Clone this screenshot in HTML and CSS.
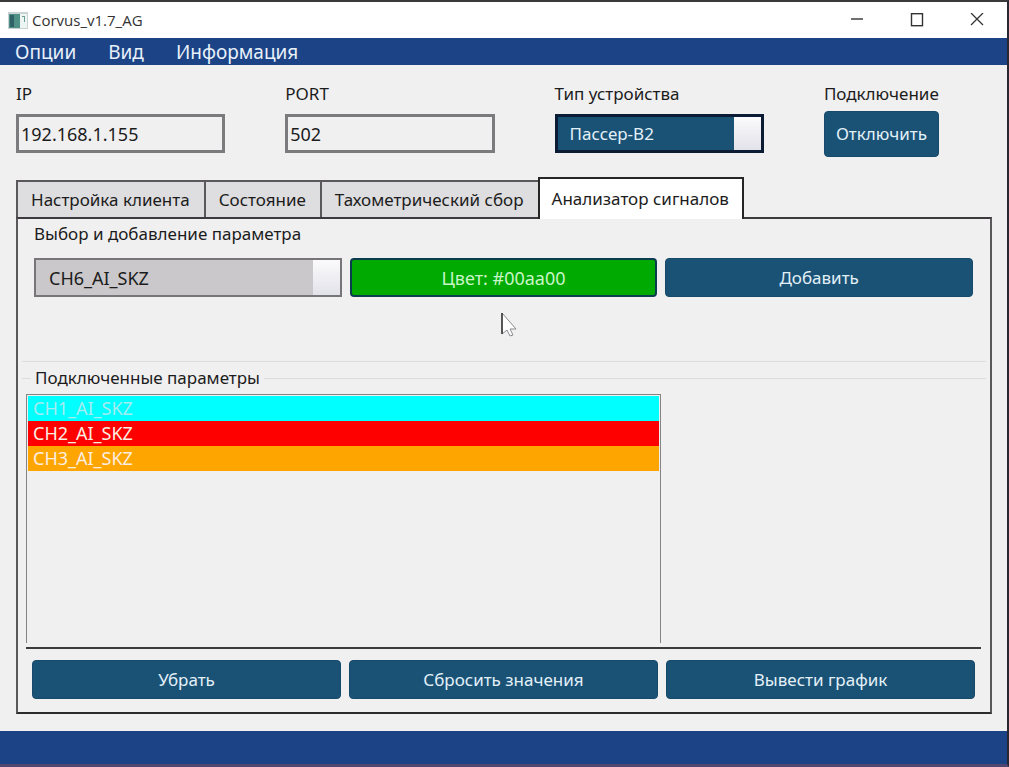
FILE: index.html
```
<!DOCTYPE html>
<html lang="ru">
<head>
    <meta charset="UTF-8">
    <meta name="viewport" content="width=device-width, initial-scale=1.0">
    <title>Corvus_v1.7_AG</title>
    <link rel="stylesheet" href="styles.css">
</head>
<body>
    <div class="window">
        <header class="titlebar">
            <svg class="app-icon" width="20" height="17" viewBox="0 0 20 17">
                <rect width="20" height="17" fill="#c9d3d3"/>
                <rect x="1" y="2" width="11" height="14" fill="#4f9186"/>
                <rect x="2" y="3" width="4" height="12" fill="#2f6367"/>
                <rect x="12" y="2" width="7" height="14" fill="#edf5f3"/>
                <path d="M16.5 4v6M14 4.500h2" stroke="#6c9c97" fill="none"/>
            </svg>
            <span class="app-title">Corvus_v1.7_AG</span>
            <div class="window-buttons">
                <button type="button" aria-label="Свернуть">
                    <svg width="14" height="14" viewBox="0 0 14 14"><path d="M1 6h12" stroke="#333" stroke-width="1.4"/></svg>
                </button>
                <button type="button" aria-label="Развернуть">
                    <svg width="14" height="14" viewBox="0 0 14 14"><rect x="1.500" y="0.700" width="11" height="12" fill="none" stroke="#333" stroke-width="1.4"/></svg>
                </button>
                <button type="button" aria-label="Закрыть">
                    <svg width="14" height="14" viewBox="0 0 14 14"><path d="M1 0l12 12M13 0L1 12" stroke="#333" stroke-width="1.3"/></svg>
                </button>
            </div>
        </header>

        <nav class="menubar">
            <a href="#">Опции</a>
            <a href="#">Вид</a>
            <a href="#">Информация</a>
        </nav>

        <main class="content">
            <form class="connection">
                <div class="field">
                    <label for="ip">IP</label>
                    <input type="text" id="ip" value="192.168.1.155">
                </div>
                <div class="field">
                    <label for="port">PORT</label>
                    <input type="text" id="port" value="502">
                </div>
                <div class="field">
                    <label for="device">Тип устройства</label>
                    <select id="device" class="select select-blue">
                        <option>Пассер-B2</option>
                    </select>
                </div>
                <div class="field field-connect">
                    <label for="connect">Подключение</label>
                    <button type="button" id="connect" class="btn">Отключить</button>
                </div>
            </form>

            <div class="tabs" role="tablist">
                <button type="button" class="tab" role="tab">Настройка клиента</button>
                <button type="button" class="tab" role="tab">Состояние</button>
                <button type="button" class="tab" role="tab">Тахометрический сбор</button>
                <button type="button" class="tab active" role="tab" aria-selected="true">Анализатор сигналов</button>
            </div>

            <section class="panel" role="tabpanel">
                <div class="add-group">
                    <label for="param">Выбор и добавление параметра</label>
                    <div class="add-row">
                        <select id="param" class="select select-grey">
                            <option>CH6_AI_SKZ</option>
                        </select>
                        <button type="button" class="btn btn-color">Цвет: #00aa00</button>
                        <button type="button" class="btn">Добавить</button>
                    </div>
                </div>

                <div class="list-group">
                    <h2 class="group-title">Подключенные параметры</h2>
                    <ul class="param-list">
                        <li class="cyan">CH1_AI_SKZ</li>
                        <li class="red">CH2_AI_SKZ</li>
                        <li class="orange">CH3_AI_SKZ</li>
                    </ul>
                </div>

                <div class="actions">
                    <button type="button" class="btn">Убрать</button>
                    <button type="button" class="btn">Сбросить значения</button>
                    <button type="button" class="btn">Вывести график</button>
                </div>
            </section>
        </main>

        <footer class="statusbar"></footer>
    </div>

    <svg class="cursor" width="18" height="28" viewBox="0 0 18 28">
        <path d="M2 2v21l5-4 3 6 3-1-3-6h6z" fill="#fff" stroke="#8a8a8e"/>
        <path d="M2 2v21" stroke="#333" stroke-width="1.5"/>
    </svg>
</body>
</html>
```
FILE: styles.css
```
* {
    box-sizing: border-box;
}
body {
    margin: 0;
    font-family: "Noto Sans", "Open Sans", sans-serif;
    font-size: 17px;
    line-height: 24px;
    color: #1c1c1c;
    background-color: #f1f0f1;
}
button, input, select {
    font: inherit;
    color: inherit;
}
.window {
    display: flex;
    flex-direction: column;
    height: 100vh;
    border-top: 2px solid #3b393c;
    border-right: 2px solid #29272f;
    border-bottom: 3px solid #50466f;
}
.titlebar {
    display: flex;
    align-items: center;
    height: 36px;
    padding-left: 8px;
    background-color: #fff;
}
.app-title {
    margin-left: 4px;
    font-family: "Open Sans", sans-serif;
    font-size: 15px;
    color: #333;
}
.window-buttons {
    display: flex;
    margin-left: auto;
}
.window-buttons button {
    display: flex;
    align-items: center;
    justify-content: center;
    width: 60px;
    height: 36px;
    padding: 0;
    border: none;
    background: none;
}
.menubar {
    display: flex;
    align-items: center;
    gap: 32px;
    height: 27px;
    padding: 0 15px;
    background-color: #1b4385;
}
.menubar a {
    font-size: 19px;
    color: #e8f1fb;
    text-decoration: none;
}
.content {
    display: flex;
    flex: 1;
    flex-direction: column;
    padding: 17px 15px 17px 16px;
}

/* connection settings */
.connection {
    display: grid;
    grid-template-columns: 20fr 20fr 20fr 11fr;
    gap: 60px;
    height: 95px;
    padding-right: 53px;
}
.field {
    display: flex;
    flex-direction: column;
    gap: 8px;
    min-width: 0;
}
.field-connect {
    gap: 5px;
}
.field input {
    width: 100%;
    height: 39px;
    padding: 0 2px;
    border: 3px solid #7b7b7d;
    background-color: #f1f0f1;
    font-size: 18px;
}
.select {
    width: 100%;
    height: 39px;
    padding: 0 12px;
    border: 3px solid #0c1c35;
    border-radius: 0;
    appearance: none;
    background-image: linear-gradient(#fbfbfd, #e2e2e9);
    background-position: right;
    background-repeat: no-repeat;
    background-size: 27px 100%;
}
.select-blue {
    background-color: #1a5276;
    color: #e3f0f8;
}
.select-grey {
    padding: 0 13px;
    border: 2px solid #77757a;
    background-color: #cac8ca;
    font-size: 18px;
}
.btn {
    height: 39px;
    padding: 0;
    border: 1px solid #17496b;
    border-radius: 4px;
    background-color: #1a5276;
    color: #e3f0f8;
    cursor: pointer;
}
.btn-color {
    border: 2px solid #0a3d4f;
    background-color: #00aa00;
    color: #c8f5c8;
    font-size: 18px;
}
.field-connect .btn {
    height: 46px;
}

/* tabs overlap the panel border by its width */
.tabs {
    display: flex;
    align-items: flex-end;
    margin-bottom: -2px;
}
.tab {
    height: 39px;
    padding: 0 14px 0 13px;
    border: 2px solid #5a585a;
    border-width: 2px 0 2px 2px;
    border-bottom-color: #3c3a3c;
    background-color: #dedddf;
    white-space: nowrap;
}
.tab.active {
    z-index: 1;
    height: 42px;
    padding: 0 13px 0 12px;
    border: 2px solid #262626;
    border-bottom: none;
    background-color: #fff;
}
.panel {
    display: flex;
    flex: 1;
    flex-direction: column;
    border: 2px solid #5a585a;
    border-top-color: #3c3a3c;
    border-bottom-color: #2c2a2c;
    padding: 3px 4px 13px;
}
.add-group {
    height: 140px;
    padding: 0 13px 0 12px;
    border-bottom: 1px solid #dddbde;
}
.add-row {
    display: grid;
    grid-template-columns: 1fr 1fr 1fr;
    gap: 8px;
    margin-top: 12px;
}
.list-group {
    display: flex;
    flex: 1;
    flex-direction: column;
    margin: 4px 5px 0 4px;
    border-bottom: 2px solid #3c3a3c;
}
.group-title {
    display: flex;
    align-items: center;
    gap: 4px;
    margin: 0 -5px 4px -4px;
    font-size: 17px;
    font-weight: normal;
}
.group-title::before, .group-title::after {
    content: "";
    width: 9px;
    height: 1px;
    background-color: #dddbde;
}
.group-title::after {
    flex: 1;
}
.param-list {
    flex: 1;
    width: 66.5%;
    margin: 0 0 4px;
    padding: 1px;
    border: 1px solid #858385;
    border-bottom: none;
    list-style: none;
}
.param-list li {
    height: 25px;
    padding-left: 5px;
    font-size: 18px;
    color: #fbeee0;
}
.param-list .cyan {
    background-color: #00ffff;
    color: #a5ecf0;
}
.param-list .red {
    background-color: #ff0000;
}
.param-list .orange {
    background-color: #ffa500;
}
.actions {
    display: grid;
    grid-template-columns: 1fr 1fr 1fr;
    gap: 8px;
    padding: 11px 11px 0 10px;
}
.statusbar {
    height: 33px;
    background-color: #1b4385;
}
.cursor {
    position: absolute;
    top: 311px;
    left: 500px;
}
```
